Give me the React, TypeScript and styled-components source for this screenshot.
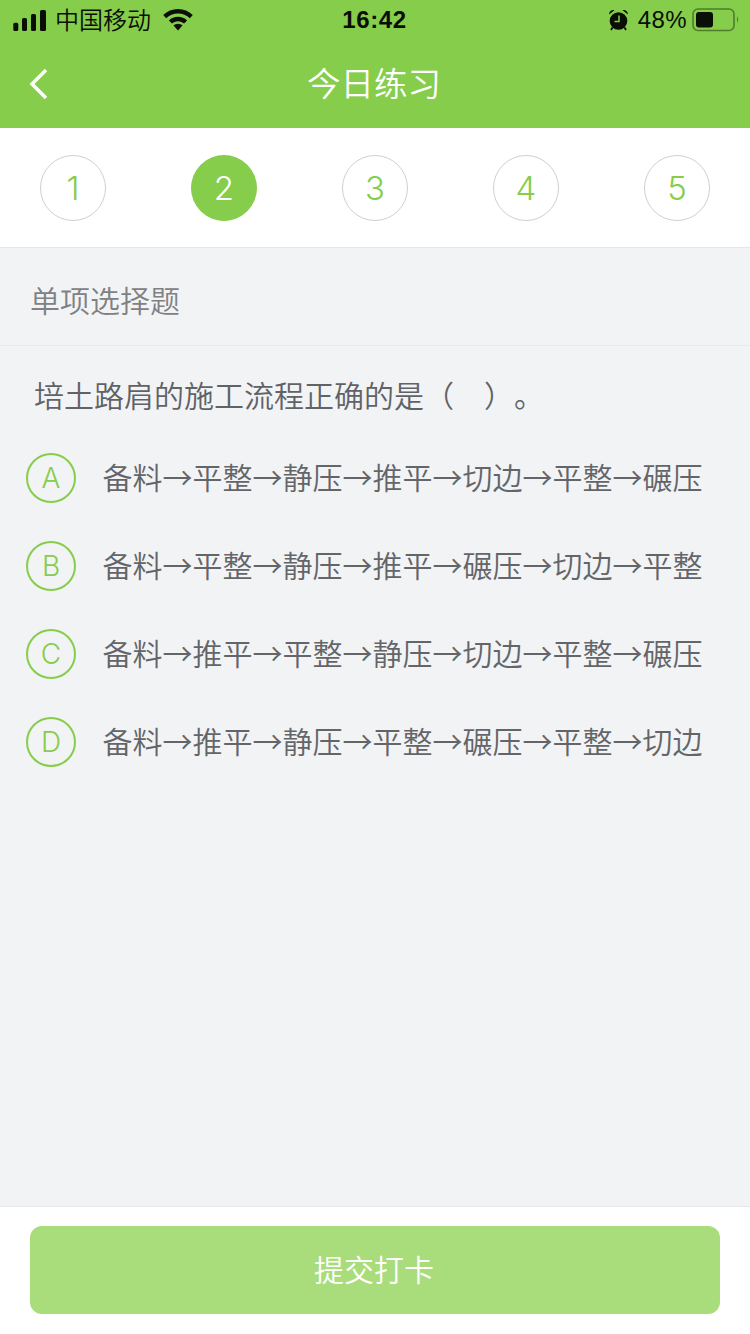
import React from "react";
import styled, { createGlobalStyle } from "styled-components";

const GlobalStyle = createGlobalStyle`
	html, body {
		margin: 0;
		padding: 0;
		background: #f2f3f5;
	}
	* {
		box-sizing: border-box;
	}
`;

const CJK = `"Noto Sans CJK SC", "Liberation Sans", sans-serif`;
const LATIN = `"Liberation Sans", "Noto Sans CJK SC", sans-serif`;
const DIGITS = `"Inter", "Liberation Sans", sans-serif`;

const Page = styled.div`
	display: flex;
	flex-direction: column;
	width: 750px;
	height: 1334px;
	overflow: hidden;
	background: #f2f3f5;
	font-family: ${CJK};
	font-weight: 350;
	text-spacing-trim: space-all;
`;

const Header = styled.header`
	flex: none;
	height: 128px;
	background: #86cd4b;
`;

const StatusBar = styled.div`
	display: grid;
	grid-template-columns: 1fr auto 1fr;
	align-items: center;
	height: 40px;
	padding: 0 11px 0 13px;
	color: #0a0f05;
`;

const StatusLeft = styled.div`
	display: flex;
	align-items: center;
`;

const Carrier = styled.span`
	margin-left: 9px;
	font-size: 24px;
	line-height: 40px;
	font-weight: 350;
	transform: translateY(-1px);
`;

const WifiIcon = styled.svg`
	margin-left: 12px;
`;

const Clock = styled.span`
	font-family: ${LATIN};
	font-size: 24px;
	font-weight: 700;
	letter-spacing: 0.6px;
	margin-left: -3px;
`;

const StatusRight = styled.div`
	display: flex;
	align-items: center;
	justify-content: flex-end;
`;

const Percent = styled.span`
	margin-left: 9px;
	margin-right: 5px;
	font-family: ${LATIN};
	font-weight: 400;
	font-size: 24px;
	letter-spacing: 0.4px;
`;

const NavBar = styled.nav`
	position: relative;
	display: flex;
	align-items: center;
	justify-content: center;
	height: 88px;
`;

const BackIcon = styled.svg`
	position: absolute;
	left: 29px;
	top: 28px;
`;

const Title = styled.h1`
	margin: 0 0 0 -2px;
	color: #fff;
	font-size: 33.5px;
	font-weight: 350;
	line-height: 84px;
	align-self: flex-start;
`;

const Steps = styled.div`
	flex: none;
	display: flex;
	justify-content: space-between;
	height: 120px;
	padding: 27px 40px 0;
	background: #fff;
	border-bottom: 1px solid #e6e7e9;
`;

const Step = styled.div<{ $active?: boolean }>`
	display: flex;
	align-items: center;
	justify-content: center;
	width: 66px;
	height: 66px;
	border-radius: 50%;
	border: 1px solid ${(p) => (p.$active ? "#86cd4b" : "#cfd0d2")};
	background: ${(p) => (p.$active ? "#86cd4b" : "#fff")};
	color: ${(p) => (p.$active ? "#fff" : "#86cd4b")};
	font-family: ${DIGITS};
	font-weight: 300;
	font-size: 33px;
`;

const Main = styled.main`
	flex: 1;
	display: flex;
	flex-direction: column;
`;

const SectionTitle = styled.div`
	height: 98px;
	padding-left: 30px;
	border-bottom: 1px solid #e9eaec;
	color: #7f8184;
	font-size: 30px;
	line-height: 103px;
`;

const Question = styled.p`
	margin: 0;
	height: 88px;
	padding-left: 34px;
	color: #606266;
	font-size: 30px;
	line-height: 97px;
	white-space: nowrap;
`;

const Options = styled.ul`
	display: flex;
	flex-direction: column;
	margin: 0;
	padding: 0 0 0 26px;
	list-style: none;
`;

const Option = styled.li`
	display: flex;
	align-items: center;
	height: 88px;
`;

const OptionKey = styled.span`
	flex: none;
	display: flex;
	align-items: center;
	justify-content: center;
	width: 50px;
	height: 50px;
	border-radius: 50%;
	border: 2px solid #86cd4b;
	color: #86cd4b;
	font-family: ${DIGITS};
	font-weight: 300;
	font-size: 28px;
`;

const OptionText = styled.span`
	margin-left: 26.5px;
	margin-top: -4px;
	color: #636568;
	font-size: 30px;
	white-space: nowrap;
`;

const Footer = styled.footer`
	flex: none;
	height: 128px;
	padding: 19px 30px 0;
	background: #fff;
	border-top: 1px solid #e6e7e9;
`;

const SubmitButton = styled.button`
	display: block;
	width: 100%;
	height: 88px;
	padding: 0 2px 4px 0;
	border: 0;
	border-radius: 12px;
	background: #a9dc7b;
	color: #fff;
	font-family: ${CJK};
	font-weight: 350;
	font-size: 30px;
`;

const Signal = () => (
	<svg width="33" height="21" viewBox="0 0 33 21" fill="#0a0f05">
		<rect x="0.300" y="12.700" width="5" height="8.300" rx="1.500" />
		<rect x="9" y="8" width="5" height="13" rx="1.500" />
		<rect x="18" y="4" width="5" height="17" rx="1.500" />
		<rect x="27" y="0" width="6" height="21" rx="1.500" />
	</svg>
);

const Wifi = () => (
	<WifiIcon width="30" height="22" viewBox="0 0 30 22" fill="#0a0f05">
		<path d="M15 0C9.300 0 4.200 2.200.2 6l3 3.200C6.300 6.200 10.400 4.500 15 4.500s8.700 1.700 11.800 4.700l3-3.200C25.800 2.200 20.700 0 15 0z" />
		<path d="M15 7.800c-3.500 0-6.700 1.400-9.100 3.600l3 3.200c1.600-1.500 3.700-2.400 6.100-2.400s4.500.9 6.100 2.400l3-3.200c-2.400-2.200-5.600-3.600-9.100-3.600z" />
		<path d="M15 14.800c-1.800 0-3.400.7-4.500 1.800l4.500 5 4.500-5c-1.100-1.100-2.700-1.800-4.500-1.800z" />
	</WifiIcon>
);

const Alarm = () => (
	<svg width="21" height="22" viewBox="0 0 20 22" fill="#0a0f05">
		<circle cx="10" cy="12" r="8.800" />
		<path d="M0.600 5.500 C0.600 2.500 3 0.600 6 1.200 Z M19.400 5.500 C19.400 2.500 17 0.600 14 1.200 Z" />
		<path d="M4 18.500 L2.500 21 M16 18.500 L17.500 21" stroke="#0a0f05" strokeWidth="1.800" />
		<path d="M10.500 6.500 V12.500 H6" fill="none" stroke="#86cd4b" strokeWidth="1.500" />
	</svg>
);

const Battery = () => (
	<svg width="47" height="24" viewBox="0 0 47 24">
		<rect x="1" y="1" width="41" height="21.500" rx="5" fill="none" stroke="#4f7d2b" strokeWidth="1.600" />
		<rect x="4" y="4" width="17" height="15.500" rx="3" fill="#0a0f05" />
		<path d="M45 8.500 C46.500 9.500 46.500 13.500 45 14.500 Z" fill="#4f7d2b" />
	</svg>
);

const steps = [1, 2, 3, 4, 5];
const options = [
	{ key: "A", text: "备料→平整→静压→推平→切边→平整→碾压" },
	{ key: "B", text: "备料→平整→静压→推平→碾压→切边→平整" },
	{ key: "C", text: "备料→推平→平整→静压→切边→平整→碾压" },
	{ key: "D", text: "备料→推平→静压→平整→碾压→平整→切边" },
];

export default function App() {
	return (
		<Page>
			<GlobalStyle />
			<Header>
				<StatusBar>
					<StatusLeft>
						<Signal />
						<Carrier>中国移动</Carrier>
						<Wifi />
					</StatusLeft>
					<Clock>16:42</Clock>
					<StatusRight>
						<Alarm />
						<Percent>48%</Percent>
						<Battery />
					</StatusRight>
				</StatusBar>
				<NavBar>
					<BackIcon width="20" height="32" viewBox="0 0 20 32">
						<path d="M17 2 L3 16 L17 30" fill="none" stroke="#fff" strokeWidth="3.500" />
					</BackIcon>
					<Title>今日练习</Title>
				</NavBar>
			</Header>
			<Steps>
				{steps.map((step) => (
					<Step key={step} $active={step === 2}>
						{step}
					</Step>
				))}
			</Steps>
			<Main>
				<SectionTitle>单项选择题</SectionTitle>
				<Question>培土路肩的施工流程正确的是（　）。</Question>
				<Options>
					{options.map((option) => (
						<Option key={option.key}>
							<OptionKey>{option.key}</OptionKey>
							<OptionText>{option.text}</OptionText>
						</Option>
					))}
				</Options>
			</Main>
			<Footer>
				<SubmitButton>提交打卡</SubmitButton>
			</Footer>
		</Page>
	);
}
